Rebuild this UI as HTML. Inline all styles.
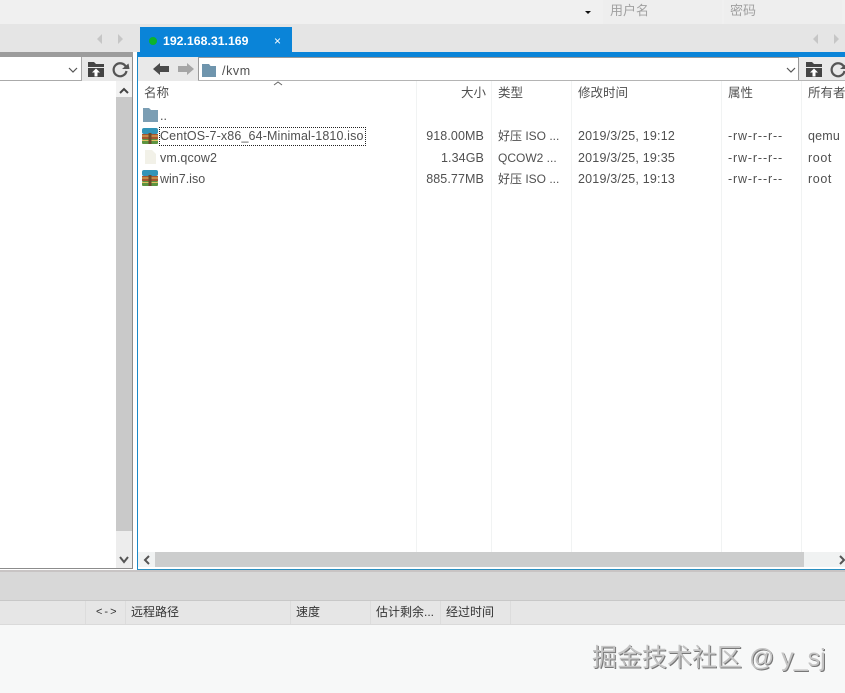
<!DOCTYPE html>
<html><head><meta charset="utf-8">
<style>
html,body{margin:0;padding:0;}
body{width:845px;height:693px;overflow:hidden;position:relative;background:#fff;font-family:"Liberation Sans","Noto Sans CJK SC",sans-serif;font-size:12px;color:#444;}
.a{position:absolute;}
.t{position:absolute;white-space:nowrap;line-height:16px;height:16px;font-size:12.5px;color:#505050;}
.r{text-align:right;}
.v{position:absolute;width:1px;background:#f1f3f3;top:81px;height:471px;}
.p{letter-spacing:.85px;}
.o{letter-spacing:.6px;}
.d{letter-spacing:.2px;}
svg{position:absolute;overflow:visible;}
</style></head><body>
<!-- top bar -->
<div class="a" style="left:0;top:0;width:845px;height:24px;background:#f0f0f0"></div>
<div class="a" style="left:603px;top:0;width:119px;height:24px;background:#eeeeee"></div>
<div class="a" style="left:724px;top:0;width:118px;height:24px;background:#eeeeee"></div>
<div class="t" style="left:610px;top:3px;color:#a0a0a0;font-size:13px">用户名</div>
<div class="t" style="left:730px;top:3px;color:#a0a0a0;font-size:13px">密码</div>
<svg style="left:0;top:0" width="845" height="24"><path d="M585 11h6l-3 3z" fill="#111"/></svg>
<!-- tab bar -->
<div class="a" style="left:0;top:24px;width:845px;height:28px;background:#e5e5e5"></div>
<svg style="left:0;top:24px" width="845" height="28">
<path d="M102 10v10l-5-5z M118 10v10l5-5z M818 10v10l-5-5z M834 10v10l5-5z" fill="#c6c6c6"/>
</svg>
<div class="a" style="left:140px;top:27px;width:152px;height:25px;background:#0a84d8"></div>
<div class="a" style="left:149px;top:37px;width:8px;height:8px;border-radius:50%;background:#0cb32c"></div>
<div class="t" style="left:163px;top:33px;color:#fff;font-weight:bold;font-size:12.3px">192.168.31.169</div>
<div class="t" style="left:274px;top:33px;color:#fff;font-size:12px">×</div>
<!-- left panel -->
<div class="a" style="left:0;top:52px;width:133px;height:5px;background:#9c9c9c"></div>
<div class="a" style="left:0;top:57px;width:133px;height:24px;background:#e9e9e9"></div>
<div class="a" style="left:0;top:57px;width:81px;height:23px;background:#fff;border-right:1px solid #a8a8a8;border-bottom:1px solid #aaa"></div>
<div class="a" style="left:0;top:81px;width:132px;height:487px;background:#fff"></div>
<div class="a" style="left:132px;top:57px;width:1px;height:512px;background:#8c8c8c"></div>
<div class="a" style="left:0;top:568px;width:133px;height:1px;background:#8c8c8c"></div>
<div class="a" style="left:116px;top:81px;width:16px;height:487px;background:#c9c9c9"></div>
<div class="a" style="left:116px;top:81px;width:16px;height:16px;background:#f2f2f2"></div>
<div class="a" style="left:116px;top:531px;width:16px;height:37px;background:#ededed"></div>
<svg style="left:0;top:0" width="140" height="580" fill="none">
<path d="M69 68l4 4 4-4" stroke="#555" stroke-width="1.2"/>
<path d="M120 93l4-4 4 4" stroke="#444" stroke-width="2"/>
<path d="M120 557l4 5 4-5" stroke="#555" stroke-width="2"/>
<path d="M88 62h6l2 2h8v3H88z M88 68h16v9H88z" fill="#444"/><path d="M96 68.500l4 4h-2.500v4h-3v-4H92z" fill="#fff"/>
<path d="M126 67A6.500 6.500 0 1 0 126.500 71" stroke="#555" stroke-width="2.200"/><path d="M122 69h7.500l-1 -5.500z" fill="#555"/>
</svg>
<!-- right panel -->
<div class="a" style="left:137px;top:52px;width:708px;height:5px;background:#0a84d8"></div>
<div class="a" style="left:137px;top:52px;width:1px;height:518px;background:#1a88c8"></div>
<div class="a" style="left:137px;top:569px;width:708px;height:1px;background:#2a8fc0"></div>
<div class="a" style="left:138px;top:57px;width:707px;height:24px;background:#e9e9e9"></div>
<div class="a" style="left:198px;top:57px;width:601px;height:23px;background:#fff;border-left:1px solid #999;border-right:1px solid #999;border-top:1px solid #999;box-sizing:border-box"></div>
<div class="a" style="left:198px;top:80px;width:647px;height:1px;background:#b4b4b4"></div>
<svg style="left:0;top:0" width="845" height="200" fill="none">
<path d="M153 69l7-6v3h9v6h-9v3z" fill="#4a4a4a"/>
<path d="M194 69l-7-6v3h-9v6h9v3z" fill="#a5a5a5"/>
<path d="M203 64h6l1.500 2h5.500v11h-14v-13z" fill="#6f95ad"/>
<path d="M787 68l4 4 4-4" stroke="#555" stroke-width="1.200"/>
<path d="M274 85l4-3 4 3" stroke="#666" stroke-width="1"/>
<path d="M806 62h6l2 2h8v3h-16z M806 68h16v9h-16z" fill="#444"/><path d="M814 68.500l4 4h-2.500v4h-3v-4H810z" fill="#fff"/>
<path d="M844 67A6.500 6.500 0 1 0 844.500 71" stroke="#555" stroke-width="2.200"/><path d="M840 69h7.500l-1 -5.500z" fill="#555"/>
</svg>
<div class="t o" style="left:222px;top:63px">/kvm</div>
<!-- columns -->
<div class="v" style="left:416px"></div>
<div class="v" style="left:491px"></div>
<div class="v" style="left:571px"></div>
<div class="v" style="left:721px"></div>
<div class="v" style="left:801px"></div>
<div class="t" style="left:144px;top:85px">名称</div>
<div class="t r" style="left:440px;top:85px;width:46px">大小</div>
<div class="t" style="left:498px;top:85px">类型</div>
<div class="t" style="left:578px;top:85px">修改时间</div>
<div class="t" style="left:728px;top:85px">属性</div>
<div class="t" style="left:808px;top:85px">所有者</div>
<!-- rows -->
<svg style="left:143px;top:108px" width="15" height="14"><path d="M0 0h6l2 2h7v12H0z" fill="#7b9eb4"/></svg>
<div class="t" style="left:160px;top:108px">..</div>
<svg style="left:142px;top:128px" width="16" height="16"><rect width="16" height="6" y="0" rx="2" fill="#3294b8"/><rect width="16" height="5" y="6" fill="#a6552f"/><rect width="16" height="5" y="11" rx="1" fill="#5c9440"/><rect y="7.500" width="16" height="1" fill="#e0bf62"/><rect y="12" width="16" height="1" fill="#e0bf62"/><rect x="6.500" y="5" width="3" height="11" fill="#6b4a2a"/></svg>
<div class="a" style="left:159px;top:127px;width:205px;height:17px;border:1px dotted #222"></div>
<div class="t" style="left:160px;top:128px;letter-spacing:.13px">CentOS-7-x86_64-Minimal-1810.iso</div>
<div class="t r" style="left:420px;top:128px;width:64px;letter-spacing:.1px">918.00MB</div>
<div class="t" style="left:498px;top:128px;font-size:12px">好压 ISO ...</div>
<div class="t d" style="left:578px;top:128px">2019/3/25, 19:12</div>
<div class="t p" style="left:728px;top:128px">-rw-r--r--</div>
<div class="t d" style="left:808px;top:128px">qemu</div>
<svg style="left:145px;top:150px" width="11" height="14"><path d="M0 0h7l4 4v10H0z" fill="#f2f1e8"/></svg>
<div class="t" style="left:160px;top:150px;letter-spacing:.1px">vm.qcow2</div>
<div class="t r" style="left:420px;top:150px;width:64px;letter-spacing:.1px">1.34GB</div>
<div class="t" style="left:498px;top:150px;font-size:12px">QCOW2 ...</div>
<div class="t d" style="left:578px;top:150px">2019/3/25, 19:35</div>
<div class="t p" style="left:728px;top:150px">-rw-r--r--</div>
<div class="t o" style="left:808px;top:150px">root</div>
<svg style="left:142px;top:170px" width="16" height="16"><rect width="16" height="6" y="0" rx="2" fill="#3294b8"/><rect width="16" height="5" y="6" fill="#a6552f"/><rect width="16" height="5" y="11" rx="1" fill="#5c9440"/><rect y="7.500" width="16" height="1" fill="#e0bf62"/><rect y="12" width="16" height="1" fill="#e0bf62"/><rect x="6.500" y="5" width="3" height="11" fill="#6b4a2a"/></svg>
<div class="t" style="left:160px;top:171px">win7.iso</div>
<div class="t r" style="left:420px;top:171px;width:64px;letter-spacing:.1px">885.77MB</div>
<div class="t" style="left:498px;top:171px;font-size:12px">好压 ISO ...</div>
<div class="t d" style="left:578px;top:171px">2019/3/25, 19:13</div>
<div class="t p" style="left:728px;top:171px">-rw-r--r--</div>
<div class="t o" style="left:808px;top:171px">root</div>
<!-- h scrollbar -->
<div class="a" style="left:138px;top:552px;width:707px;height:15px;background:#f0f2f2"></div>
<div class="a" style="left:155px;top:552px;width:649px;height:15px;background:#cccdcd"></div>
<svg style="left:0;top:545px" width="845" height="25" fill="none">
<path d="M149 11l-4 4 4 4" stroke="#555" stroke-width="2"/>
<path d="M840 11l4 4-4 4" stroke="#555" stroke-width="2"/>
</svg>
<!-- bottom -->
<div class="a" style="left:0;top:570px;width:845px;height:30px;background:#d8d8d8;border-top:2px solid #c8c4c4;box-sizing:border-box"></div>
<div class="a" style="left:0;top:600px;width:845px;height:25px;background:#e6e6e6;border-top:1px solid #c8c8c8;border-bottom:1px solid #dadada;box-sizing:border-box"></div>
<div class="a" style="left:0;top:625px;width:845px;height:68px;background:#f7f8f8"></div>
<div class="v" style="left:85px;top:601px;height:23px;background:#dcdcdc"></div>
<div class="v" style="left:125px;top:601px;height:23px;background:#dcdcdc"></div>
<div class="v" style="left:290px;top:601px;height:23px;background:#dcdcdc"></div>
<div class="v" style="left:370px;top:601px;height:23px;background:#dcdcdc"></div>
<div class="v" style="left:440px;top:601px;height:23px;background:#dcdcdc"></div>
<div class="v" style="left:510px;top:601px;height:23px;background:#dcdcdc"></div>
<div class="t" style="left:96px;top:604px;font-size:11px;color:#333;letter-spacing:2px">&lt;-&gt;</div>
<div class="t" style="left:131px;top:604px;font-size:12px;color:#333">远程路径</div>
<div class="t" style="left:296px;top:604px;font-size:12px;color:#333">速度</div>
<div class="t" style="left:376px;top:604px;font-size:12px;color:#333">估计剩余...</div>
<div class="t" style="left:446px;top:604px;font-size:12px;color:#333">经过时间</div>
<!-- watermark -->
<div class="t" style="left:592px;top:643px;height:30px;line-height:30px;font-size:25px;color:#c4c4c4;text-shadow:1px 1px 0 #777">掘金技术社区 @ y_sj</div>
</body></html>
